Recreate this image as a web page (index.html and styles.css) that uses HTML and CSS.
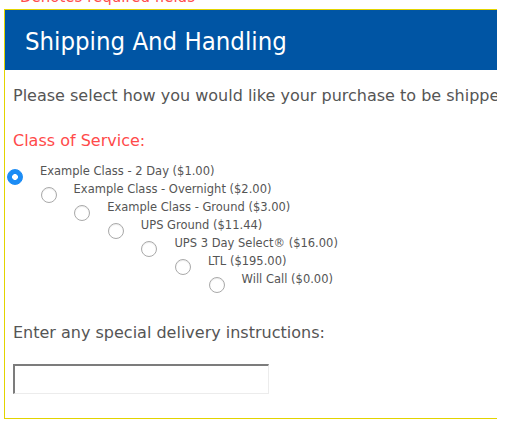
FILE: index.html
```html
<!DOCTYPE html>
<html lang="en">
<head>
<meta charset="utf-8">
<title>Shipping And Handling</title>
<link rel="stylesheet" href="styles.css">
</head>
<body>
<div class="note">Denotes required fields</div>
<section class="panel">
  <h2 class="panel-title">Shipping And Handling</h2>
  <div class="panel-body">
    <p class="intro">Please select how you would like your purchase to be shipped:</p>
    <p class="field-label">Class of Service:</p>
    <div class="options">
      <label class="option lvl-0"><input type="radio" name="svc" class="radio" checked><span class="opt-text">Example Class - 2 Day ($1.00)</span></label>
      <label class="option lvl-1"><input type="radio" name="svc" class="radio"><span class="opt-text">Example Class - Overnight ($2.00)</span></label>
      <label class="option lvl-2"><input type="radio" name="svc" class="radio"><span class="opt-text">Example Class - Ground ($3.00)</span></label>
      <label class="option lvl-3"><input type="radio" name="svc" class="radio"><span class="opt-text">UPS Ground ($11.44)</span></label>
      <label class="option lvl-4"><input type="radio" name="svc" class="radio"><span class="opt-text">UPS 3 Day Select&reg; ($16.00)</span></label>
      <label class="option lvl-5"><input type="radio" name="svc" class="radio"><span class="opt-text">LTL ($195.00)</span></label>
      <label class="option lvl-6"><input type="radio" name="svc" class="radio"><span class="opt-text">Will Call ($0.00)</span></label>
    </div>
    <p class="instructions">Enter any special delivery instructions:</p>
    <input type="text" class="text-box" aria-label="Special delivery instructions">
  </div>
</section>
</body>
</html>
```
FILE: styles.css
```css
html, body {
  margin: 0;
  padding: 0;
  background: #ffffff;
}

body {
  font-family: "DejaVu Sans", sans-serif;
  color: #555555;
  overflow: hidden;
}

.note {
  color: #ff4d4d;
  font-size: 15px;
  line-height: 16px;
  height: 16px;
  margin-top: -11px;
  padding-left: 20px;
  margin-bottom: 4px;
  white-space: nowrap;
}

.panel {
  width: 493px;
  box-sizing: border-box;
  margin-left: 4px;
  border-top: 1px solid #e2d400;
  border-left: 1px solid #e2d400;
  border-bottom: 1px solid #e2d400;
  overflow: hidden;
}

.panel-title {
  margin: 0;
  height: 60px;
  line-height: 62px;
  padding-left: 20px;
  background: #0055a4;
  color: #ffffff;
  font-family: "DejaVu Sans Condensed", "DejaVu Sans", sans-serif;
  font-stretch: condensed;
  font-size: 25.5px;
  font-weight: normal;
  white-space: nowrap;
}

.panel-body {
  padding: 16px 0 24px 8px;
}

.intro,
.field-label,
.instructions {
  margin: 0;
  font-size: 16px;
  line-height: 20px;
  white-space: nowrap;
}

.field-label {
  margin-top: 25px;
  color: #ff4a4a;
}

.options {
  margin-top: 11px;
  margin-left: -7px;
  display: flex;
  flex-direction: column;
}

.option {
  display: flex;
  align-items: flex-start;
  height: 18px;
  font-size: 11.5px;
  line-height: 18px;
  color: #555555;
  white-space: nowrap;
}

.lvl-0 { padding-left: 1px; }
.lvl-1 { padding-left: 34.6px; }
.lvl-2 { padding-left: 68.2px; }
.lvl-3 { padding-left: 101.8px; }
.lvl-4 { padding-left: 135.4px; }
.lvl-5 { padding-left: 169px; }
.lvl-6 { padding-left: 202.6px; }

.radio {
  -webkit-appearance: none;
  appearance: none;
  flex: none;
  box-sizing: border-box;
  width: 16px;
  height: 16px;
  margin: 7px 17px 0 0;
  border-radius: 50%;
  border: 1px solid #a9a9a9;
  background: #ffffff;
  box-shadow: inset 0 1px 1px rgba(0, 0, 0, 0.08);
}

.radio:checked {
  border-color: #1b8cf5;
  background: radial-gradient(circle, #ffffff 0 2.6px, #1b8cf5 3.2px);
  box-shadow: none;
}

.instructions {
  margin-top: 35px;
}

.text-box {
  display: block;
  box-sizing: border-box;
  width: 256px;
  height: 30px;
  margin: 21px 0 0 0;
  padding: 0 4px;
  border-top: 2px solid #7c7c7c;
  border-left: 2px solid #7c7c7c;
  border-right: 1px solid #ececec;
  border-bottom: 1px solid #ececec;
  background: #ffffff;
  font: inherit;
  outline: none;
}
```
